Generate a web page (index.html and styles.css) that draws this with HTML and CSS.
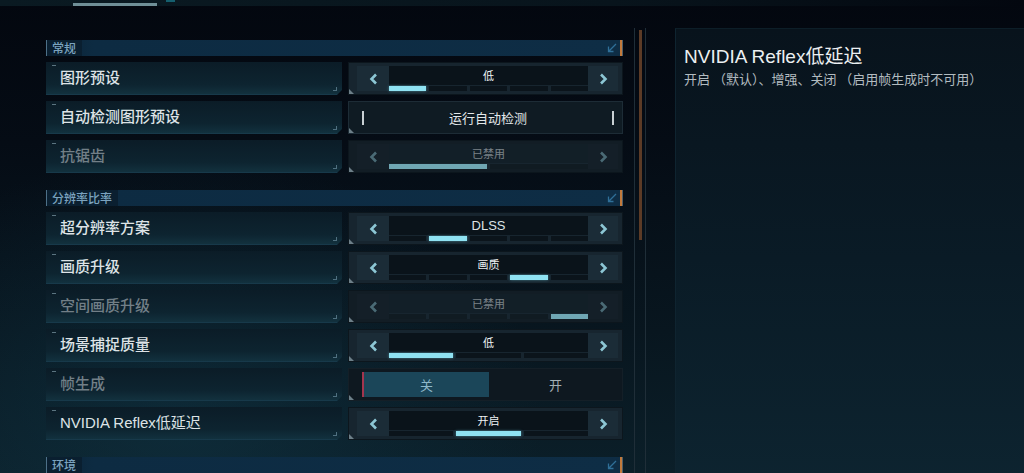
FILE: index.html
```html
<!DOCTYPE html>
<html lang="zh-CN">
<head>
    <meta charset="UTF-8">
    <meta name="viewport" content="width=device-width, initial-scale=1.0">
    <title>图形设置</title>
    <link rel="stylesheet" href="styles.css">
</head>
<body>
    <div class="topbar">
        <div class="tab-mark"></div>
        <div class="tab-dot"></div>
    </div>

    <div class="layout">
        <div class="settings">
            <div class="section">
                <span class="section-title">常规</span>
                <span class="section-end">
                    <svg width="10" height="10" viewBox="0 0 10 10"><path d="M9 1 L1.5 8.5 M1.5 3.5 V8.5 H6.5" fill="none" stroke="#2f6f98" stroke-width="1.3"/></svg>
                    <i class="orange"></i>
                </span>
            </div>

            <div class="row">
                <div class="label">图形预设</div>
                <div class="control">
                    <div class="arrow"><svg width="9" height="12" viewBox="0 0 9 12"><path d="M7 1.5 L2.5 6 L7 10.5" fill="none" stroke="#8cc6d4" stroke-width="2.6"/></svg></div>
                    <div class="center">
                        <div class="value">低</div>
                        <div class="segs"><i class="on"></i><i></i><i></i><i></i><i></i></div>
                    </div>
                    <div class="arrow"><svg width="9" height="12" viewBox="0 0 9 12"><path d="M2 1.5 L6.5 6 L2 10.5" fill="none" stroke="#8cc6d4" stroke-width="2.6"/></svg></div>
                </div>
            </div>

            <div class="row">
                <div class="label">自动检测图形预设</div>
                <div class="control button">
                    <i class="bar"></i>
                    <span>运行自动检测</span>
                    <i class="bar"></i>
                </div>
            </div>

            <div class="row disabled">
                <div class="label">抗锯齿</div>
                <div class="control">
                    <div class="arrow"><svg width="9" height="12" viewBox="0 0 9 12"><path d="M7 1.5 L2.5 6 L7 10.5" fill="none" stroke="#8cc6d4" stroke-width="2.6"/></svg></div>
                    <div class="center">
                        <div class="value">已禁用</div>
                        <div class="segs"><i class="on"></i><i></i></div>
                    </div>
                    <div class="arrow"><svg width="9" height="12" viewBox="0 0 9 12"><path d="M2 1.5 L6.5 6 L2 10.5" fill="none" stroke="#8cc6d4" stroke-width="2.6"/></svg></div>
                </div>
            </div>

            <div class="section spaced">
                <span class="section-title">分辨率比率</span>
                <span class="section-end">
                    <svg width="10" height="10" viewBox="0 0 10 10"><path d="M9 1 L1.5 8.5 M1.5 3.5 V8.5 H6.5" fill="none" stroke="#2f6f98" stroke-width="1.3"/></svg>
                    <i class="orange"></i>
                </span>
            </div>

            <div class="row">
                <div class="label">超分辨率方案</div>
                <div class="control">
                    <div class="arrow"><svg width="9" height="12" viewBox="0 0 9 12"><path d="M7 1.5 L2.5 6 L7 10.5" fill="none" stroke="#8cc6d4" stroke-width="2.6"/></svg></div>
                    <div class="center">
                        <div class="value latin">DLSS</div>
                        <div class="segs"><i></i><i class="on"></i><i></i><i></i><i></i></div>
                    </div>
                    <div class="arrow"><svg width="9" height="12" viewBox="0 0 9 12"><path d="M2 1.5 L6.5 6 L2 10.5" fill="none" stroke="#8cc6d4" stroke-width="2.6"/></svg></div>
                </div>
            </div>

            <div class="row">
                <div class="label">画质升级</div>
                <div class="control">
                    <div class="arrow"><svg width="9" height="12" viewBox="0 0 9 12"><path d="M7 1.5 L2.5 6 L7 10.5" fill="none" stroke="#8cc6d4" stroke-width="2.6"/></svg></div>
                    <div class="center">
                        <div class="value">画质</div>
                        <div class="segs"><i></i><i></i><i></i><i class="on"></i><i></i></div>
                    </div>
                    <div class="arrow"><svg width="9" height="12" viewBox="0 0 9 12"><path d="M2 1.5 L6.5 6 L2 10.5" fill="none" stroke="#8cc6d4" stroke-width="2.6"/></svg></div>
                </div>
            </div>

            <div class="row disabled">
                <div class="label">空间画质升级</div>
                <div class="control">
                    <div class="arrow"><svg width="9" height="12" viewBox="0 0 9 12"><path d="M7 1.5 L2.5 6 L7 10.5" fill="none" stroke="#8cc6d4" stroke-width="2.6"/></svg></div>
                    <div class="center">
                        <div class="value">已禁用</div>
                        <div class="segs"><i></i><i></i><i></i><i></i><i class="on"></i></div>
                    </div>
                    <div class="arrow"><svg width="9" height="12" viewBox="0 0 9 12"><path d="M2 1.5 L6.5 6 L2 10.5" fill="none" stroke="#8cc6d4" stroke-width="2.6"/></svg></div>
                </div>
            </div>

            <div class="row">
                <div class="label">场景捕捉质量</div>
                <div class="control">
                    <div class="arrow"><svg width="9" height="12" viewBox="0 0 9 12"><path d="M7 1.5 L2.5 6 L7 10.5" fill="none" stroke="#8cc6d4" stroke-width="2.6"/></svg></div>
                    <div class="center">
                        <div class="value">低</div>
                        <div class="segs"><i class="on"></i><i></i><i></i></div>
                    </div>
                    <div class="arrow"><svg width="9" height="12" viewBox="0 0 9 12"><path d="M2 1.5 L6.5 6 L2 10.5" fill="none" stroke="#8cc6d4" stroke-width="2.6"/></svg></div>
                </div>
            </div>

            <div class="row dim-label">
                <div class="label">帧生成</div>
                <div class="control toggle">
                    <div class="opt active">关</div>
                    <div class="opt">开</div>
                </div>
            </div>

            <div class="row">
                <div class="label latin">NVIDIA Reflex低延迟</div>
                <div class="control">
                    <div class="arrow"><svg width="9" height="12" viewBox="0 0 9 12"><path d="M7 1.5 L2.5 6 L7 10.5" fill="none" stroke="#8cc6d4" stroke-width="2.6"/></svg></div>
                    <div class="center">
                        <div class="value">开启</div>
                        <div class="segs"><i></i><i class="on"></i><i></i></div>
                    </div>
                    <div class="arrow"><svg width="9" height="12" viewBox="0 0 9 12"><path d="M2 1.5 L6.5 6 L2 10.5" fill="none" stroke="#8cc6d4" stroke-width="2.6"/></svg></div>
                </div>
            </div>

            <div class="section spaced">
                <span class="section-title">环境</span>
                <span class="section-end">
                    <svg width="10" height="10" viewBox="0 0 10 10"><path d="M9 1 L1.5 8.5 M1.5 3.5 V8.5 H6.5" fill="none" stroke="#2f6f98" stroke-width="1.3"/></svg>
                    <i class="orange"></i>
                </span>
            </div>
        </div>

        <div class="scrollbar">
            <div class="thumb"></div>
        </div>

        <div class="panel">
            <h1>NVIDIA Reflex低延迟</h1>
            <p>开启 （默认）、增强、关闭 （启用帧生成时不可用）</p>
        </div>
    </div>
</body>
</html>
```

FILE: styles.css
```css
* {
    margin: 0;
    padding: 0;
    box-sizing: border-box;
}

html, body {
    height: 100%;
    overflow: hidden;
}

body {
    font-family: "Noto Sans CJK SC", "Liberation Sans", sans-serif;
    background:
        radial-gradient(ellipse 520px 380px at 180px 420px, rgba(18, 60, 78, 0.45), transparent 70%),
        linear-gradient(to bottom, #03070f 0%, #050c15 30%, #08161f 70%, #0b1f29 100%);
    color: #dfe5e8;
}

.latin {
    font-family: "Liberation Sans", "Noto Sans CJK SC", sans-serif;
}

/* top tabs strip */
.topbar {
    height: 6px;
    position: relative;
    background: linear-gradient(to right, #0a1a22, #08141c 60%, #03070f);
}

.tab-mark {
    position: absolute;
    left: 73px;
    top: 3px;
    width: 84px;
    height: 3px;
    background: #6f8f97;
}

.tab-dot {
    position: absolute;
    left: 166px;
    top: 0;
    width: 9px;
    height: 2px;
    background: #155f6e;
}

.layout {
    display: flex;
    align-items: flex-start;
}

/* settings column */
.settings {
    width: 577px;
    margin-left: 46px;
    margin-top: 34px;
    display: flex;
    flex-direction: column;
    gap: 6px;
}

.section {
    height: 16px;
    display: flex;
    align-items: center;
    border-left: 1px solid #4d7088;
    background: linear-gradient(to right, #0a2133 0%, #0d2b42 8%, #0e2d45 100%);
}

.section.spaced {
    margin-top: 11px;
}

.section-title {
    font-size: 12px;
    font-weight: 500;
    color: #7ba3bf;
    padding: 0 6px 0 5px;
    height: 100%;
    line-height: 16px;
    background: #0a1f30;
}

.section-end {
    margin-left: auto;
    display: flex;
    align-items: center;
    gap: 2px;
    height: 100%;
}

.section-end svg {
    margin-right: 1px;
}

.orange {
    height: 100%;
    background: #c27a3c;
    border-right: 1px solid #50606a;
    width: 3px;
}

.row {
    display: flex;
    gap: 6px;
    height: 33px;
}

.label {
    width: 296px;
    position: relative;
    display: flex;
    align-items: center;
    padding: 0 0 3px 14px;
    font-size: 15px;
    font-weight: 500;
    color: #dde3e6;
    background: linear-gradient(to bottom, #0b1c27 0%, #0d2430 70%, #12313e 100%);
    border-bottom: 1px solid #17394a;
    clip-path: polygon(0 0, 100% 0, 100% calc(100% - 5px), calc(100% - 5px) 100%, 0 100%);
}

.label.latin {
    font-weight: normal;
}

.label::before {
    content: "";
    position: absolute;
    left: 6px;
    top: 3px;
    width: 4px;
    height: 1px;
    background: #5b7480;
}

.label::after {
    content: "";
    position: absolute;
    right: 5px;
    bottom: 3px;
    width: 3px;
    height: 3px;
    border-right: 1px solid #4f7080;
    border-bottom: 1px solid #4f7080;
}

.disabled .label,
.dim-label .label {
    color: #727f87;
}

.control {
    width: 275px;
    display: flex;
    position: relative;
    padding: 3px 4px 3px 8px;
    background: #17252f;
    border: 1px solid #0c161d;
}

.control::before {
    content: "";
    position: absolute;
    left: 0;
    bottom: 0;
    border-left: 5px solid #6d7f88;
    border-top: 5px solid transparent;
}

.arrow {
    width: 32px;
    display: flex;
    align-items: center;
    justify-content: center;
    background: #1b2c37;
}

.arrow:last-child {
    width: 30px;
}

.center {
    flex: 1;
    display: flex;
    flex-direction: column;
    background: #17252f;
}

.value {
    height: 21px;
    background: #0a131a;
    font-size: 11px;
    color: #eef2f4;
    text-align: center;
    line-height: 19px;
}

.value.latin {
    font-size: 13px;
    color: #dce2e5;
}

.segs {
    display: flex;
    gap: 3px;
    margin-top: 1px;
    height: 5px;
}

.segs i {
    flex: 1;
    background: #0b141b;
}

.segs i.on {
    background: #8fe2f2;
    box-shadow: 0 0 3px rgba(120, 220, 240, 0.5);
}

.disabled .control {
    background: #121d25;
}

.disabled .arrow {
    background: #141f28;
}

.disabled .arrow svg,
.disabled .value {
    opacity: 0.45;
}

.disabled .value {
    background: #0e1820;
}

.disabled .segs i {
    background: #101b22;
}

.disabled .segs i.on {
    background: #6fa6b3;
    box-shadow: none;
}

.control.button {
    align-items: center;
    justify-content: space-between;
    padding: 0 8px 0 13px;
    background: #0f1b23;
    border-color: #1d2c36;
}

.control.button span {
    font-size: 13px;
    color: #e3e8ea;
}

.bar {
    width: 2px;
    height: 14px;
    background: #c9d0d3;
}

.control.toggle {
    padding: 3px 4px 3px 13px;
    gap: 4px;
    background: #0e1820;
    border-color: #141f27;
}

.opt {
    flex: 1;
    display: flex;
    align-items: center;
    justify-content: center;
    font-size: 13px;
    color: #a3afb5;
}

.opt.active {
    background: #1b4659;
    color: #8eb8c9;
    border-left: 2px solid #a3354e;
}

/* scrollbar */
.scrollbar {
    width: 12px;
    height: 460px;
    margin-left: 11px;
    margin-top: 22px;
    border-left: 1px solid #1f2e38;
    border-right: 1px solid #1f2e38;
    padding-top: 2px;
    display: flex;
    justify-content: center;
}

.thumb {
    width: 3px;
    height: 210px;
    background: #5c3b26;
}

/* description panel */
.panel {
    flex: 1;
    margin-left: 29px;
    margin-top: 22px;
    height: 460px;
    padding: 17px 8px;
    background: linear-gradient(to bottom, #08131c 0%, #0a1b26 50%, #0d2430 100%);
    border-left: 1px solid #0f2430;
    border-top: 1px solid #0d1e28;
}

.panel h1 {
    font-family: "Liberation Sans", "Noto Sans CJK SC", sans-serif;
    font-weight: normal;
    font-size: 19px;
    color: #eceff1;
    line-height: 22px;
}

.panel p {
    font-size: 13px;
    color: #b3bcc0;
    margin-top: 3px;
    line-height: 16px;
}
```
